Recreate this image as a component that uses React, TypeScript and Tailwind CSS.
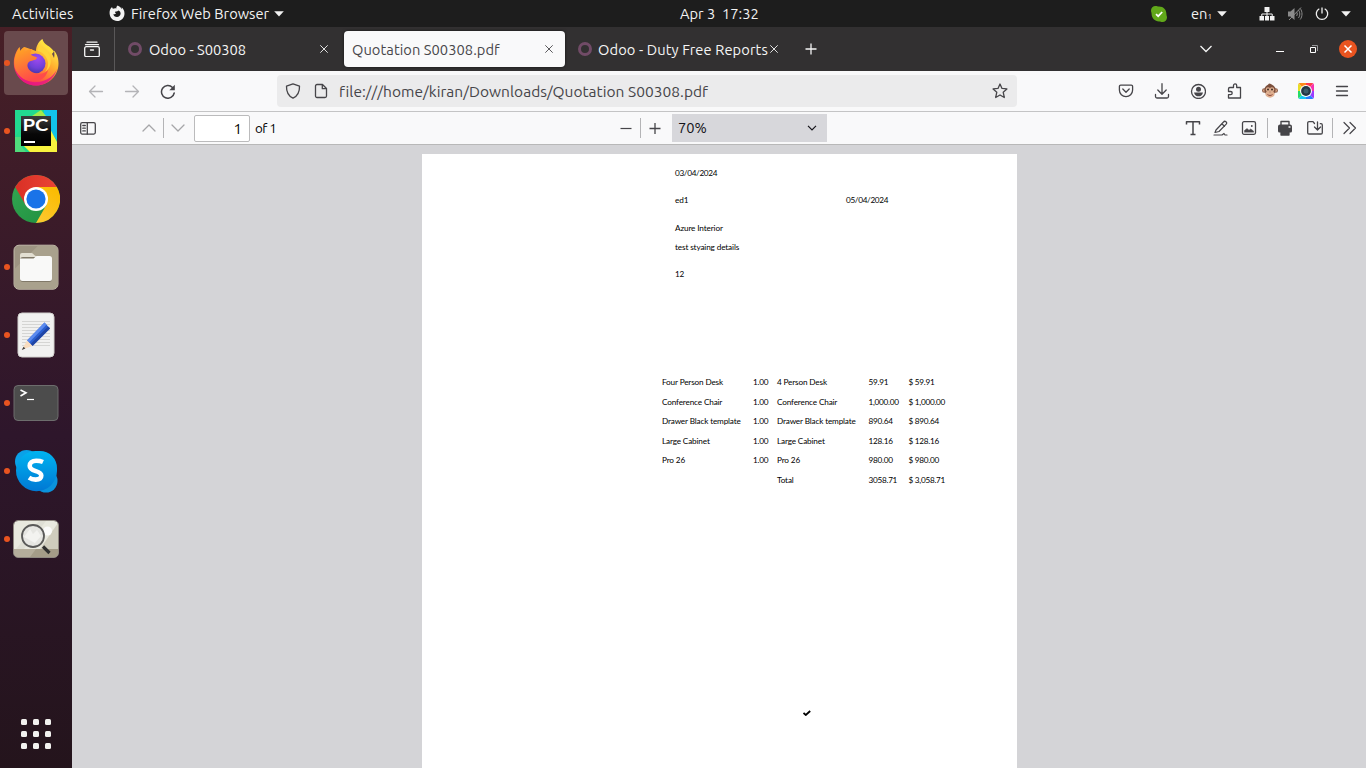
import type { ReactNode } from "react";

const UI = "font-['Ubuntu','Noto_Sans',sans-serif]";

/* ---------- small building blocks ---------- */

function Glyph({ className = "", children, size = 16 }: { className?: string; children: ReactNode; size?: number }) {
  return (
    <svg
      width={size}
      height={size}
      viewBox={`0 0 ${size} ${size}`}
      fill="none"
      stroke="currentColor"
      strokeWidth="1.3"
      strokeLinecap="round"
      strokeLinejoin="round"
      className={`shrink-0 ${className}`}
    >
      {children}
    </svg>
  );
}

function Caret({ className = "" }: { className?: string }) {
  return (
    <svg width="10" height="6" viewBox="0 0 10 6" className={`shrink-0 ${className}`}>
      <path d="M0.2 0.3h9.6L5 5.4z" fill="#f2f2f2" />
    </svg>
  );
}

/* ---------- top bar ---------- */

function TopBar() {
  return (
    <header className="flex h-[27px] shrink-0 items-center bg-[#1d1d1d] text-[14.67px] leading-[26px] text-[#f2f2f2]">
      <span className="ml-[12px] w-[97px] pt-px whitespace-nowrap tracking-[0.15px]">Activities</span>
      <svg width="16" height="17" viewBox="0 0 16 17" className="shrink-0">
        <path
          d="M8.6 0.4C7.5 1.4 7.2 2.4 7.4 3.4C6.2 3.1 5 3.2 4 3.8C3.4 3.3 3.1 2.6 3.1 1.9C1.2 3.4 0.4 5.8 0.6 8.6C0.9 12.9 4 16 8.1 16C12.4 16 15.5 12.7 15.5 8.4C15.5 5.8 14.4 3.6 12.6 2.2C12.9 3 12.9 3.7 12.8 4.2C12 2.2 10.4 1.6 8.6 0.4Z"
          fill="#f2f2f2"
        />
        <path d="M6.4 6.4C7.6 6.6 8.7 6.3 9.3 5.4C11 6 11.7 7.3 11.6 8.8C11.4 10.8 9.9 12 8 12C5.9 12 4.5 10.5 4.4 8.9C5.2 9.4 6.3 9.3 7.2 8.6C6.2 8.3 5.8 7.4 6.4 6.4Z" fill="#1d1d1d" />
      </svg>
      <span className="ml-[6px] w-[143px] pt-px whitespace-nowrap tracking-[0.02px]">Firefox Web Browser</span>
      <Caret />
      <span className="ml-[396px] w-[471px] pt-px whitespace-pre">Apr 3  17:32</span>
      <svg width="16" height="16" viewBox="0 0 16 16" className="shrink-0">
        <path d="M4.5 0C6 0 6.5 .6 8 .6c4.600 0 7.400 3.400 7.400 7.400 0 1.400.6 2 .6 3.500A4.500 4.500 0 0 1 11.500 16C10 16 9.400 15.400 8 15.400 3.800 15.400.6 12 .6 8 .6 6.500 0 6 0 4.500A4.500 4.500 0 0 1 4.500 0Z" fill="#61a81a" />
        <path d="M5 8.100L7.200 10.200L11.200 6" fill="none" stroke="#fff" strokeWidth="1.700" />
      </svg>
      <span className="ml-[24px] w-[26px] pt-px whitespace-nowrap">
        en<span className="text-[8px] leading-none">1</span>
      </span>
      <Caret />
      <svg width="16" height="14" viewBox="0 0 16 14" className="ml-[32px] shrink-0">
        <path d="M5.500 0h5v5h-5zM0.500 9h4.500v4.500H0.500zM11 9h4.500v4.500H11zM6 9h4v4.500H6z" fill="#f2f2f2" />
        <path d="M8 4v6M2.800 10V7h10.400v3" fill="none" stroke="#f2f2f2" />
      </svg>
      <svg width="16" height="16" viewBox="0 0 16 16" className="ml-[12px] shrink-0">
        <path d="M1 5.500h2.500L7.500 2v12L3.500 10.500H1z" fill="#8b8b8b" />
        <path d="M9.500 6c1 1 1 3 0 4M11.300 4c2 2 2 6 0 8M13.200 2.500c2.400 3 2.400 8 0 11M2 14L14 1.500" fill="none" stroke="#8b8b8b" />
      </svg>
      <svg width="14" height="14" viewBox="0 0 14 14" className="ml-[12px] shrink-0">
        <path d="M7 0.500v6M4.300 1.700a5.700 5.700 0 1 0 5.400 0" fill="none" stroke="#f2f2f2" strokeWidth="1.300" />
      </svg>
      <Caret className="ml-[12px]" />
    </header>
  );
}

/* ---------- dock ---------- */

function DockItem({ children, running = true, active = false }: { children: ReactNode; running?: boolean; active?: boolean }) {
  return (
    <div className="flex h-[68px] shrink-0 items-center pl-[4px]">
      <div className={`flex h-[64px] w-[64px] items-center rounded-[4px] ${active ? "bg-[#694a4d]" : ""}`}>
        <span className={`h-[6px] w-[6px] shrink-0 rounded-full ${running ? "bg-[#e95420]" : ""}`} />
        <span className="ml-[2px] h-[48px] w-[48px]">{children}</span>
      </div>
    </div>
  );
}

function Svg48({ children }: { children: ReactNode }) {
  return (
    <svg width="48" height="48" viewBox="0 0 48 48" className="block">
      {children}
    </svg>
  );
}

function FirefoxIcon() {
  return (
    <Svg48>
      <defs>
        <linearGradient id="fxBody" x1="0.85" y1="0.1" x2="0.2" y2="0.95">
          <stop offset="0" stopColor="#fff44f" />
          <stop offset="0.35" stopColor="#ffb02e" />
          <stop offset="0.65" stopColor="#ff6a3a" />
          <stop offset="1" stopColor="#f0146e" />
        </linearGradient>
        <radialGradient id="fxGlobe" cx="0.6" cy="0.25" r="0.8">
          <stop offset="0" stopColor="#a04af0" />
          <stop offset="0.6" stopColor="#7040d8" />
          <stop offset="1" stopColor="#4535a5" />
        </radialGradient>
        <linearGradient id="fxHead" x1="0" y1="0" x2="0.4" y2="1">
          <stop offset="0" stopColor="#ffae1f" />
          <stop offset="1" stopColor="#ff4a4a" />
        </linearGradient>
      </defs>
      <path
        d="M30.500 0C28 3 27.600 6.500 28 9.500C30 12.500 36 14 36.500 19L42 12.500C40.500 10 37.500 7.500 35.500 6.500C32.500 4.500 31 2.500 30.500 0Z"
        fill="#ffe03a"
      />
      <path
        d="M12.500 8C11 8.500 9 10.500 8.200 12C7.500 11 7.400 9.500 7.600 8C4.500 11 2 17 1.800 23.500C1.600 36.500 11.500 46.500 24 46.500C36.800 46.500 46.500 36.500 46.500 24.500C46.500 18.500 44.500 14 41.800 11.500C42.800 15 42.500 17 42 19C40 13 35.500 10 32 7C30 5.500 29.500 2.500 30.300 0C26 3 24 8 24 12Z"
        fill="url(#fxBody)"
      />
      <circle cx="23.500" cy="24.500" r="10" fill="url(#fxGlobe)" />
      <path
        d="M7.700 8C6 11 2.500 16 2.200 23C2 36 12 43 22 42.500C31 42 35 36 36 31C33 35 26 36 20 33C15 30 14 25 17.500 22.500C21 21 24.500 21.500 25 18.500C23 17 20.500 17.500 18.500 15.500C18 13 19 11.500 20.500 10C17 9.500 14.500 11 12.500 13C12 11.500 12 10 12.500 8C10.500 9 9.500 10.500 8.500 12C8 11 7.700 9.500 7.700 8Z"
        fill="url(#fxHead)"
      />
      <path d="M25.500 12C31 13 34.500 17 36 23C36.500 28 34.500 31 33 33C39 29 40 22 37.500 16C35 11 30 9 28 6C26.500 8 25.500 10 25.500 12Z" fill="#ffd43a" />
      <path d="M3 30C7 39 16 44 26 43C35 42 42 37 45 30C42 40 34 46.500 24 46.500C14 46.500 5.500 40 3 30Z" fill="#e31587" opacity="0.8" />
    </Svg48>
  );
}

function PyCharmIcon() {
  return (
    <Svg48>
      <defs>
        <linearGradient id="pcBox" x1="0" y1="0" x2="0" y2="1">
          <stop offset="0" stopColor="#3c3c3c" />
          <stop offset="0.6" stopColor="#080808" />
          <stop offset="1" stopColor="#000" />
        </linearGradient>
      </defs>
      <rect x="3" y="3" width="42" height="42" fill="#21d789" />
      <path d="M32 3h13v30L31 14z" fill="#12c4ea" />
      <path d="M18 45L9 36l2-17 20-13 5 12 9 17v10z" fill="#f8f33e" />
      <path d="M3 30l8-11 20-13-6-3H3z" fill="#22d990" />
      <path d="M3 30h6v9l5 6H3z" fill="#50dc7c" />
      <path d="M20 9l9-6 5 6z" fill="#a4e94c" />
      <rect x="9" y="9" width="30" height="30" fill="url(#pcBox)" />
      <rect x="12" y="34" width="11" height="2" fill="#fff" />
      <text x="10.500" y="24.300" fontSize="17.500" fontWeight="700" fill="#fff" textLength="26" lengthAdjust="spacingAndGlyphs" className="font-['Lato',sans-serif]">
        PC
      </text>
    </Svg48>
  );
}

function ChromeIcon() {
  return (
    <Svg48>
      <defs>
        <linearGradient id="crR" x1="0" y1="0" x2="1" y2="0"><stop offset="0" stopColor="#d93025" /><stop offset="1" stopColor="#ea4335" /></linearGradient>
        <linearGradient id="crY" x1="0" y1="1" x2="0.600" y2="0"><stop offset="0" stopColor="#fcc934" /><stop offset="1" stopColor="#fbbc04" /></linearGradient>
        <linearGradient id="crG" x1="1" y1="1" x2="0" y2="0"><stop offset="0" stopColor="#1e8e3e" /><stop offset="1" stopColor="#34a853" /></linearGradient>
      </defs>
      <circle cx="24" cy="24" r="24" fill="url(#crG)" />
      <path d="M24 48A24 24 0 0 0 44.800 12H24L34.400 30Z" fill="url(#crY)" />
      <path d="M24 12H44.800A24 24 0 0 0 3.200 12L13.600 30Z" fill="url(#crR)" />
      <circle cx="24" cy="24" r="12" fill="#fff" />
      <circle cx="24" cy="24" r="9.600" fill="#1a73e8" />
    </Svg48>
  );
}

function FilesIcon() {
  return (
    <Svg48>
      <rect x="2" y="2.200" width="44" height="44" rx="5" fill="#9d9482" stroke="#c3bcab" />
      <path d="M2.500 26L26 2.700h15a5 5 0 0 1 5 5V41a5 5 0 0 1-5 5H7.500a5 5 0 0 1-5-5z" fill="#a9a18d" />
      <path d="M8 12a2 2 0 0 1 2-2h9.500c2 0 2.500 3 4.500 3v5H8z" fill="#e3dfd2" />
      <rect x="8" y="14" width="32" height="25" rx="3" fill="#817969" />
      <path d="M8 15.500h13.500l3-2.500H37.500a2.500 2.500 0 0 1 2.500 2.500V35.500a2.500 2.500 0 0 1-2.500 2.500h-27A2.500 2.500 0 0 1 8 35.500z" fill="#f9f9f8" />
    </Svg48>
  );
}

function EditorIcon() {
  return (
    <Svg48>
      <rect x="6" y="2" width="36" height="44" rx="4" fill="#f1f1f0" stroke="#d2d1ce" />
      <path d="M10 10.500h28M10 13.500h28M10 16.500h28M10 19.500h28M10 22.500h28M10 25.500h28M10 28.500h28M10 31.500h28M10 34.500h28" stroke="#d5d5d3" />
      <path d="M15 29.500L32.500 11.500l5.500 6L20.500 35z" fill="#2a5fd0" />
      <path d="M15 29.500L32.500 11.500l2 2.200L17 31.500z" fill="#5b8bef" />
      <path d="M18.500 33L36 15.500l2 2L20.500 35z" fill="#1f45a5" />
      <path d="M15 29.500L10 38.500l10.500-3.500z" fill="#f8dcbf" />
      <path d="M11.500 35.800L9.800 39l3.600-1.600z" fill="#414141" />
    </Svg48>
  );
}

function TerminalIcon() {
  return (
    <Svg48>
      <rect x="2" y="6.500" width="44" height="35" rx="4" fill="#4c4c4c" stroke="#6d6d6d" />
      <path d="M8.500 11l5.500 2.800L8.500 17" fill="none" stroke="#fff" strokeWidth="1.600" />
      <path d="M15 20.500h7" stroke="#fff" strokeWidth="1.200" />
    </Svg48>
  );
}

function SkypeIcon() {
  return (
    <Svg48>
      <defs>
        <linearGradient id="sk" x1="0" y1="0" x2="0" y2="1"><stop offset="0" stopColor="#00b4f0" /><stop offset="1" stopColor="#0078d4" /></linearGradient>
      </defs>
      <circle cx="14.500" cy="14.500" r="11.500" fill="#0aa1e8" />
      <circle cx="34" cy="34" r="11.500" fill="#0a93dc" />
      <path d="M24 4h4a17 17 0 0 1 17 17v3a20.500 20.500 0 0 1-41-.5A20 20 0 0 1 24 4z" fill="url(#sk)" />
      <path
        d="M31 15C28.500 13.900 26 13.700 24.200 13.700C19.800 13.700 17.700 16 17.700 18.700C17.700 25.500 29.300 22.700 29.300 28.600C29.300 31.200 27 32.600 23.700 32.600C21 32.600 18.800 31.900 17 30.700"
        fill="none"
        stroke="#fff"
        strokeWidth="4.600"
      />
    </Svg48>
  );
}

function ViewerIcon() {
  return (
    <Svg48>
      <defs><clipPath id="vw"><rect x="2" y="6" width="44" height="36" rx="4" /></clipPath></defs>
      <g clipPath="url(#vw)">
        <rect x="2" y="6" width="44" height="36" fill="#e9e9df" />
        <path d="M46 8v26H28z" fill="#cfccbd" />
        <path d="M27 6h7L12 34H4z" fill="#dfdfd5" />
        <rect x="2" y="34" width="44" height="8" fill="#b5ae9c" />
        <path d="M24 34h22v8H18z" fill="#a49c88" />
      </g>
      <circle cx="35.500" cy="16" r="4.500" fill="#fbfbfa" />
      <circle cx="21" cy="21" r="11" fill="#e6e6e2" stroke="#5a5a59" strokeWidth="1.800" />
      <path d="M12 22l6-8 3 5 4-4 4 6-6 7z" fill="#f8f8f7" opacity="0.700" />
      <path d="M31 31.500l6.500 6.500" stroke="#303030" strokeWidth="3.200" />
      <rect x="1.500" y="5.500" width="45" height="37" rx="4.500" fill="none" stroke="#8f8981" />
    </Svg48>
  );
}

function Dock() {
  return (
    <nav className="flex w-[72px] shrink-0 flex-col bg-linear-to-b from-[#471f26] via-[#2e162b] via-55% to-[#24141c] pt-[2px]">
      <DockItem active><FirefoxIcon /></DockItem>
      <DockItem><PyCharmIcon /></DockItem>
      <DockItem running={false}><ChromeIcon /></DockItem>
      <DockItem><FilesIcon /></DockItem>
      <DockItem><EditorIcon /></DockItem>
      <DockItem><TerminalIcon /></DockItem>
      <DockItem><SkypeIcon /></DockItem>
      <DockItem><ViewerIcon /></DockItem>
      <div className="mt-auto mb-[19px] ml-[21px] grid w-[30px] grid-cols-3 gap-[6px]">
        {Array.from({ length: 9 }, (_, i) => (
          <span key={i} className="h-[6px] w-[6px] rounded-[1.5px] bg-[#f2f1ef]" />
        ))}
      </div>
    </nav>
  );
}

/* ---------- browser chrome ---------- */

function TabClose({ className = "" }: { className?: string }) {
  return (
    <svg width="8" height="8" viewBox="0 0 8 8" className={`shrink-0 ${className}`}>
      <path d="M0.300 0.300l7.400 7.400M7.700 0.300l-7.400 7.400" stroke="currentColor" strokeWidth="0.900" />
    </svg>
  );
}

function OdooMark() {
  return <span className="h-[14px] w-[14px] shrink-0 rounded-full border-[3px] border-[#714b67]" />;
}

function TabStrip() {
  return (
    <div className="flex h-[44px] shrink-0 items-center bg-[#323031] text-[14.67px] leading-[20px] text-[#f5f5f5]">
      <Glyph className="ml-[12px]">
        <path d="M3 1.200h10M1.500 3.700h13" strokeWidth="1.300" />
        <rect x="0.700" y="5.700" width="14.600" height="10" rx="1.500" />
        <path d="M6.500 9h3" />
      </Glyph>
      <span className="ml-[14px] h-[44px] w-px bg-[#5a5859]" />
      <span className="ml-[13px] flex"><OdooMark /></span>
      <span className="ml-[7px] w-[170px] pt-px whitespace-nowrap">Odoo - S00308</span>
      <TabClose className="ml-[1px]" />
      <div className="ml-[16px] flex h-[36px] w-[221px] items-center rounded-[4px] bg-[#f9f9fa] text-[#48474b] shadow-[0_0_3px_rgba(0,0,0,0.6)]">
        <span className="ml-[8px] w-[193px] pt-px whitespace-nowrap tracking-[0.06px]">Quotation S00308.pdf</span>
        <TabClose />
      </div>
      <span className="ml-[13px] flex"><OdooMark /></span>
      <span className="ml-[6px] w-[172px] pt-px whitespace-nowrap tracking-[0.1px]">Odoo - Duty Free Reports</span>
      <TabClose />
      <svg width="12" height="12" viewBox="0 0 12 12" className="ml-[27px] shrink-0">
        <path d="M6 0.500v11M0.500 6h11" stroke="#f5f5f5" strokeWidth="1.300" />
      </svg>
      <svg width="12" height="8" viewBox="0 0 12 8" className="ml-[383px] shrink-0">
        <path d="M0.500 1L6 6.500L11.500 1" fill="none" stroke="#f5f5f5" strokeWidth="1.300" />
      </svg>
      <span className="mt-[4px] ml-[64px] h-px w-[8px] bg-white" />
      <svg width="8" height="8" viewBox="0 0 8 8" className="ml-[26px] shrink-0">
        <path d="M0.500 2.500h5v5h-5z" fill="none" stroke="#fff" />
        <path d="M2 0.500h5.500V6" fill="none" stroke="#98979a" />
      </svg>
      <svg width="18" height="18" viewBox="0 0 18 18" className="ml-[21px] shrink-0">
        <circle cx="9" cy="9" r="9" fill="#e95420" />
        <path d="M5.500 5.500l7 7M12.500 5.500l-7 7" stroke="#fff" strokeWidth="1.500" />
      </svg>
    </div>
  );
}

function Monkey() {
  return (
    <svg width="16" height="16" viewBox="0 0 16 16" className="shrink-0">
      <circle cx="2.300" cy="7.500" r="2.300" fill="#8a5a44" />
      <circle cx="13.700" cy="7.500" r="2.300" fill="#8a5a44" />
      <circle cx="2.200" cy="7.500" r="1.200" fill="#d9a583" />
      <circle cx="13.800" cy="7.500" r="1.200" fill="#d9a583" />
      <ellipse cx="8" cy="7" rx="5.600" ry="5.700" fill="#7b4f3c" />
      <path d="M6 2l1-1.500L9 1l1 1.500z" fill="#7b4f3c" />
      <ellipse cx="6" cy="6.600" rx="2.200" ry="2.300" fill="#e0b090" />
      <ellipse cx="10" cy="6.600" rx="2.200" ry="2.300" fill="#e0b090" />
      <ellipse cx="8" cy="11" rx="4.600" ry="3.700" fill="#e0b090" />
      <circle cx="6" cy="6.500" r="1" fill="#3a2a24" />
      <circle cx="10" cy="6.500" r="1" fill="#3a2a24" />
      <path d="M7.200 9h0.300M8.600 9h0.300" stroke="#6a4636" />
      <path d="M5.500 11.500c1.500 1.300 3.500 1.300 5 0" fill="none" stroke="#8f4a3c" />
    </svg>
  );
}

function NavBar() {
  return (
    <div className="flex h-[41px] shrink-0 items-center border-b border-[#c4c4c5] bg-[#f9f9fa] text-[#464549]">
      <Glyph className="ml-[16px] text-[#b4b4b7]">
        <path d="M14.500 8.500H1.800M7 3L1.500 8.500L7 14" />
      </Glyph>
      <Glyph className="ml-[20px] text-[#b4b4b7]">
        <path d="M1.500 8.500h12.700M9 3L14.500 8.500L9 14" />
      </Glyph>
      <Glyph className="ml-[20px]">
        <path d="M14.200 10A6.400 6.400 0 1 1 12.500 4.400" strokeWidth="1.500" />
        <path d="M14.800 1.700v5.500h-5.500z" fill="currentColor" stroke="none" />
      </Glyph>
      <div className="ml-[101px] flex h-[32px] w-[740px] items-center rounded-[4px] bg-[#ebebec]">
        <Glyph className="ml-[8px]">
          <path d="M8 0.900L14.500 3.200C14.700 9 12.500 13 8 15.200C3.500 13 1.300 9 1.500 3.200Z" />
        </Glyph>
        <Glyph className="ml-[12px]">
          <path d="M4 1.500h5.500l4 4V13a1.500 1.500 0 0 1-1.500 1.500H4A1.500 1.500 0 0 1 2.500 13V3A1.500 1.500 0 0 1 4 1.500zM9.300 1.700v4h4" />
        </Glyph>
        <span className="ml-[10px] w-[653px] pt-px whitespace-nowrap text-[15.5px] leading-[20px] tracking-[0.03px]">
          file:///home/kiran/Downloads/Quotation S00308.pdf
        </span>
        <Glyph>
          <path d="M8 1l2 4.400 4.900.5-3.700 3.300 1.100 5.300L8 12l-4.300 2.500 1.100-5.300L1.100 5.900 6 5.400z" />
        </Glyph>
      </div>
      <Glyph className="ml-[101px]">
        <path d="M2.700 2.200h10.600a1.300 1.300 0 0 1 1.300 1.300v3.500a6.600 6.600 0 0 1-13.200 0V3.500a1.300 1.300 0 0 1 1.300-1.300zM4.800 6L8 9.200L11.200 6" />
      </Glyph>
      <Glyph className="ml-[20px]">
        <path d="M8 0.700v10.300M3.800 7L8 11.200L12.200 7M1.500 11.500v2a1.500 1.500 0 0 0 1.500 1.500h10a1.500 1.500 0 0 0 1.500-1.500v-2" />
      </Glyph>
      <Glyph className="ml-[20px]">
        <circle cx="8.500" cy="8.500" r="7" />
        <circle cx="8.500" cy="6.300" r="2.500" fill="currentColor" stroke="none" />
        <path d="M4 9.500h9C12.500 12.500 10.500 13.300 8.500 13.300S4.500 12.500 4 9.500z" fill="currentColor" stroke="none" />
      </Glyph>
      <Glyph className="ml-[21px]">
        <path d="M4.500 4.500h2V2.500a1.600 1.600 0 0 1 3.200 0V4.500h3.800v10.500H1.500V11.700H3.600a1.600 1.600 0 0 0 0-3.200H1.500V5.900q0-1.400 1.400-1.400z" />
      </Glyph>
      <span className="ml-[19px] flex"><Monkey /></span>
      <svg width="16" height="16" viewBox="0 0 16 16" className="ml-[20px] shrink-0">
        <defs><clipPath id="ringClip"><rect width="16" height="16" rx="2" /></clipPath></defs>
        <g clipPath="url(#ringClip)">
          <path d="M8 8V0h8z" fill="#ff3b4b" />
          <path d="M8 8L0 0h8z" fill="#ff8a1c" />
          <path d="M8 8L16 0v8z" fill="#f531b0" />
          <path d="M8 8h8v8z" fill="#9c3cff" />
          <path d="M8 8v8h8z" fill="#287dff" />
          <path d="M8 8l-8 8h8z" fill="#14c9f5" />
          <path d="M8 8H0v8z" fill="#27db68" />
          <path d="M8 8L0 0v8z" fill="#e8dd25" />
        </g>
        <circle cx="8" cy="8" r="6" fill="#fff" />
        <circle cx="8" cy="8" r="4.900" fill="#253746" />
        <circle cx="8" cy="8" r="2.500" fill="#3d5c69" />
      </svg>
      <Glyph className="ml-[20px]">
        <path d="M2.500 3.500h11M2.500 8h11M2.500 12.500h11" />
      </Glyph>
    </div>
  );
}

function Divider({ className = "" }: { className?: string }) {
  return <span className={`h-[20px] w-px shrink-0 bg-[#b4b4b6] ${className}`} />;
}

function PdfToolbar() {
  return (
    <div className="flex h-[33px] shrink-0 items-center border-b border-[#b8b8b8] bg-[#f9f9fa] text-[#464549]">
      <Glyph className="ml-[8px]">
        <rect x="0.700" y="2.700" width="14.600" height="11.400" rx="1.500" />
        <path d="M7.300 3v11M2.800 5.500h2.500M2.800 8.200h2.500M2.800 10.900h2.500" />
      </Glyph>
      <Glyph className="ml-[45px] text-[#a6a6a8]"><path d="M2 11L8 5l6 6" /></Glyph>
      <Divider className="ml-[6px]" />
      <Glyph className="ml-[6px] text-[#a6a6a8]"><path d="M2 5l6 6 6-6" /></Glyph>
      <div className="ml-[8px] flex h-[27px] w-[56px] items-center justify-end rounded-[2px] border border-[#bbbbbc] bg-white pt-px pr-[7px] text-[15px] leading-[20px] text-black">
        1
      </div>
      <span className="ml-[5px] w-[362px] pt-px whitespace-nowrap text-[13.33px] leading-[20px] text-black tracking-[-0.55px]">of 1</span>
      <Glyph className="ml-[1px]"><path d="M2.500 8.500h11" strokeLinecap="butt" strokeWidth="1.200" /></Glyph>
      <Divider className="ml-[6px]" />
      <Glyph className="ml-[6px]"><path d="M2.500 8.500h11M8 3v11" strokeLinecap="butt" strokeWidth="1.300" /></Glyph>
      <div className="ml-[9px] flex h-[28px] w-[155px] items-center bg-[#d7d7db] text-[14.67px] leading-[20px] text-[#15141a]">
        <span className="ml-[6px] w-[129px]">70%</span>
        <svg width="10" height="6" viewBox="0 0 10 6" className="shrink-0">
          <path d="M1 0.800L5 4.800L9 0.800" fill="none" stroke="currentColor" strokeWidth="1.200" />
        </svg>
      </div>
      <Glyph className="ml-[358px]">
        <path d="M1.500 4.500V1.700h13v2.800M8 2v12.500M5.500 14.500h5" strokeWidth="1.500" strokeLinecap="butt" />
      </Glyph>
      <Glyph className="ml-[12px]">
        <path d="M3 10l7.500-8a1.700 1.700 0 0 1 2.700 2.200L6 11.500L2 12.500zM8.800 3.800l2.700 2.500M1 15h8l2-1.500 1 1.500h2" strokeWidth="1.200" />
      </Glyph>
      <Glyph className="ml-[12px]">
        <rect x="1.500" y="1.700" width="13" height="12.600" rx="1.500" />
        <path d="M3.500 12V10.500l2.500-2L8 10.300l1.700-1.300L12.500 11v1z" fill="currentColor" strokeWidth="0.500" />
        <circle cx="10.800" cy="6" r="0.900" fill="currentColor" stroke="none" />
      </Glyph>
      <Divider className="ml-[10px]" />
      <Glyph className="ml-[9px]">
        <path d="M4 5V1.500h8V5" strokeWidth="1.400" />
        <path d="M3 4.500h10a2 2 0 0 1 2 2V11a1.500 1.500 0 0 1-1.500 1.500H12V10H4v2.500H2.500A1.500 1.500 0 0 1 1 11V6.500a2 2 0 0 1 2-2z" fill="currentColor" stroke="none" />
        <path d="M4 10h8v5H4z" fill="currentColor" />
        <path d="M12 7h1" stroke="#f9f9fa" />
      </Glyph>
      <Glyph className="ml-[14px]">
        <path d="M7.500 3.500L6 1.700H2A1.300 1.300 0 0 0 .7 3v9.700A1.300 1.300 0 0 0 2 14h12a1.300 1.300 0 0 0 1.300-1.300V5A1.300 1.300 0 0 0 14 3.700h-.7M10.500 2v7.500M7.500 7l3 3 3-3" />
      </Glyph>
      <Divider className="ml-[9px]" />
      <Glyph className="ml-[9px]"><path d="M2 2.500L7.500 8L2 13.500M8 2.500L13.500 8L8 13.500" strokeWidth="1.200" /></Glyph>
    </div>
  );
}

/* ---------- document ---------- */

const LINES = [
  ["Four Person Desk", "1.00", "4 Person Desk", "59.91", "$ 59.91"],
  ["Conference Chair", "1.00", "Conference Chair", "1,000.00", "$ 1,000.00"],
  ["Drawer Black template", "1.00", "Drawer Black template", "890.64", "$ 890.64"],
  ["Large Cabinet", "1.00", "Large Cabinet", "128.16", "$ 128.16"],
  ["Pro 26", "1.00", "Pro 26", "980.00", "$ 980.00"],
  ["", "", "Total", "3058.71", "$ 3,058.71"],
];

function Page() {
  return (
    <article className="mt-[9px] flex w-[595px] flex-col bg-white font-['Lato',sans-serif] text-[8.2px] leading-[10px] tracking-[-0.13px] whitespace-nowrap text-black">
      <div className="ml-[253px] flex flex-col">
        <p className="mt-[14px] tracking-[-0.33px]">03/04/2024</p>
        <div className="mt-[17px] flex">
          <p className="w-[171px]">ed1</p>
          <p className="tracking-[-0.33px]">05/04/2024</p>
        </div>
        <p className="mt-[18px]">Azure Interior</p>
        <p className="mt-[9px]">test styaing details</p>
        <p className="mt-[17px]">12</p>
      </div>
      <div className="mt-[93.3px] ml-[240px] flex flex-col">
        {LINES.map((row, r) => (
          <div key={r} className="grid h-[19.55px] grid-cols-[91px_24px_91.500px_40px_60px] items-center">
            {row.map((cell, c) => (
              <span key={c} className={c % 2 || c === 4 ? "tracking-[-0.26px]" : "tracking-[-0.15px]"}>{cell}</span>
            ))}
          </div>
        ))}
      </div>
      <svg width="8" height="6" viewBox="0 0 8 6" className="mt-[220px] ml-[381px]">
        <path d="M0.500 3L2.800 5L7.200 1" fill="none" stroke="#000" strokeWidth="1.800" />
      </svg>
    </article>
  );
}

export default function App() {
  return (
    <div className={`flex h-[768px] w-[1366px] flex-col overflow-hidden ${UI}`}>
      <TopBar />
      <div className="flex min-h-0 flex-1">
        <Dock />
        <main className="flex min-w-0 flex-1 flex-col">
          <TabStrip />
          <NavBar />
          <PdfToolbar />
          <div className="flex min-h-0 flex-1 overflow-hidden bg-[#d4d4d7] pl-[350px]">
            <Page />
          </div>
        </main>
      </div>
    </div>
  );
}
